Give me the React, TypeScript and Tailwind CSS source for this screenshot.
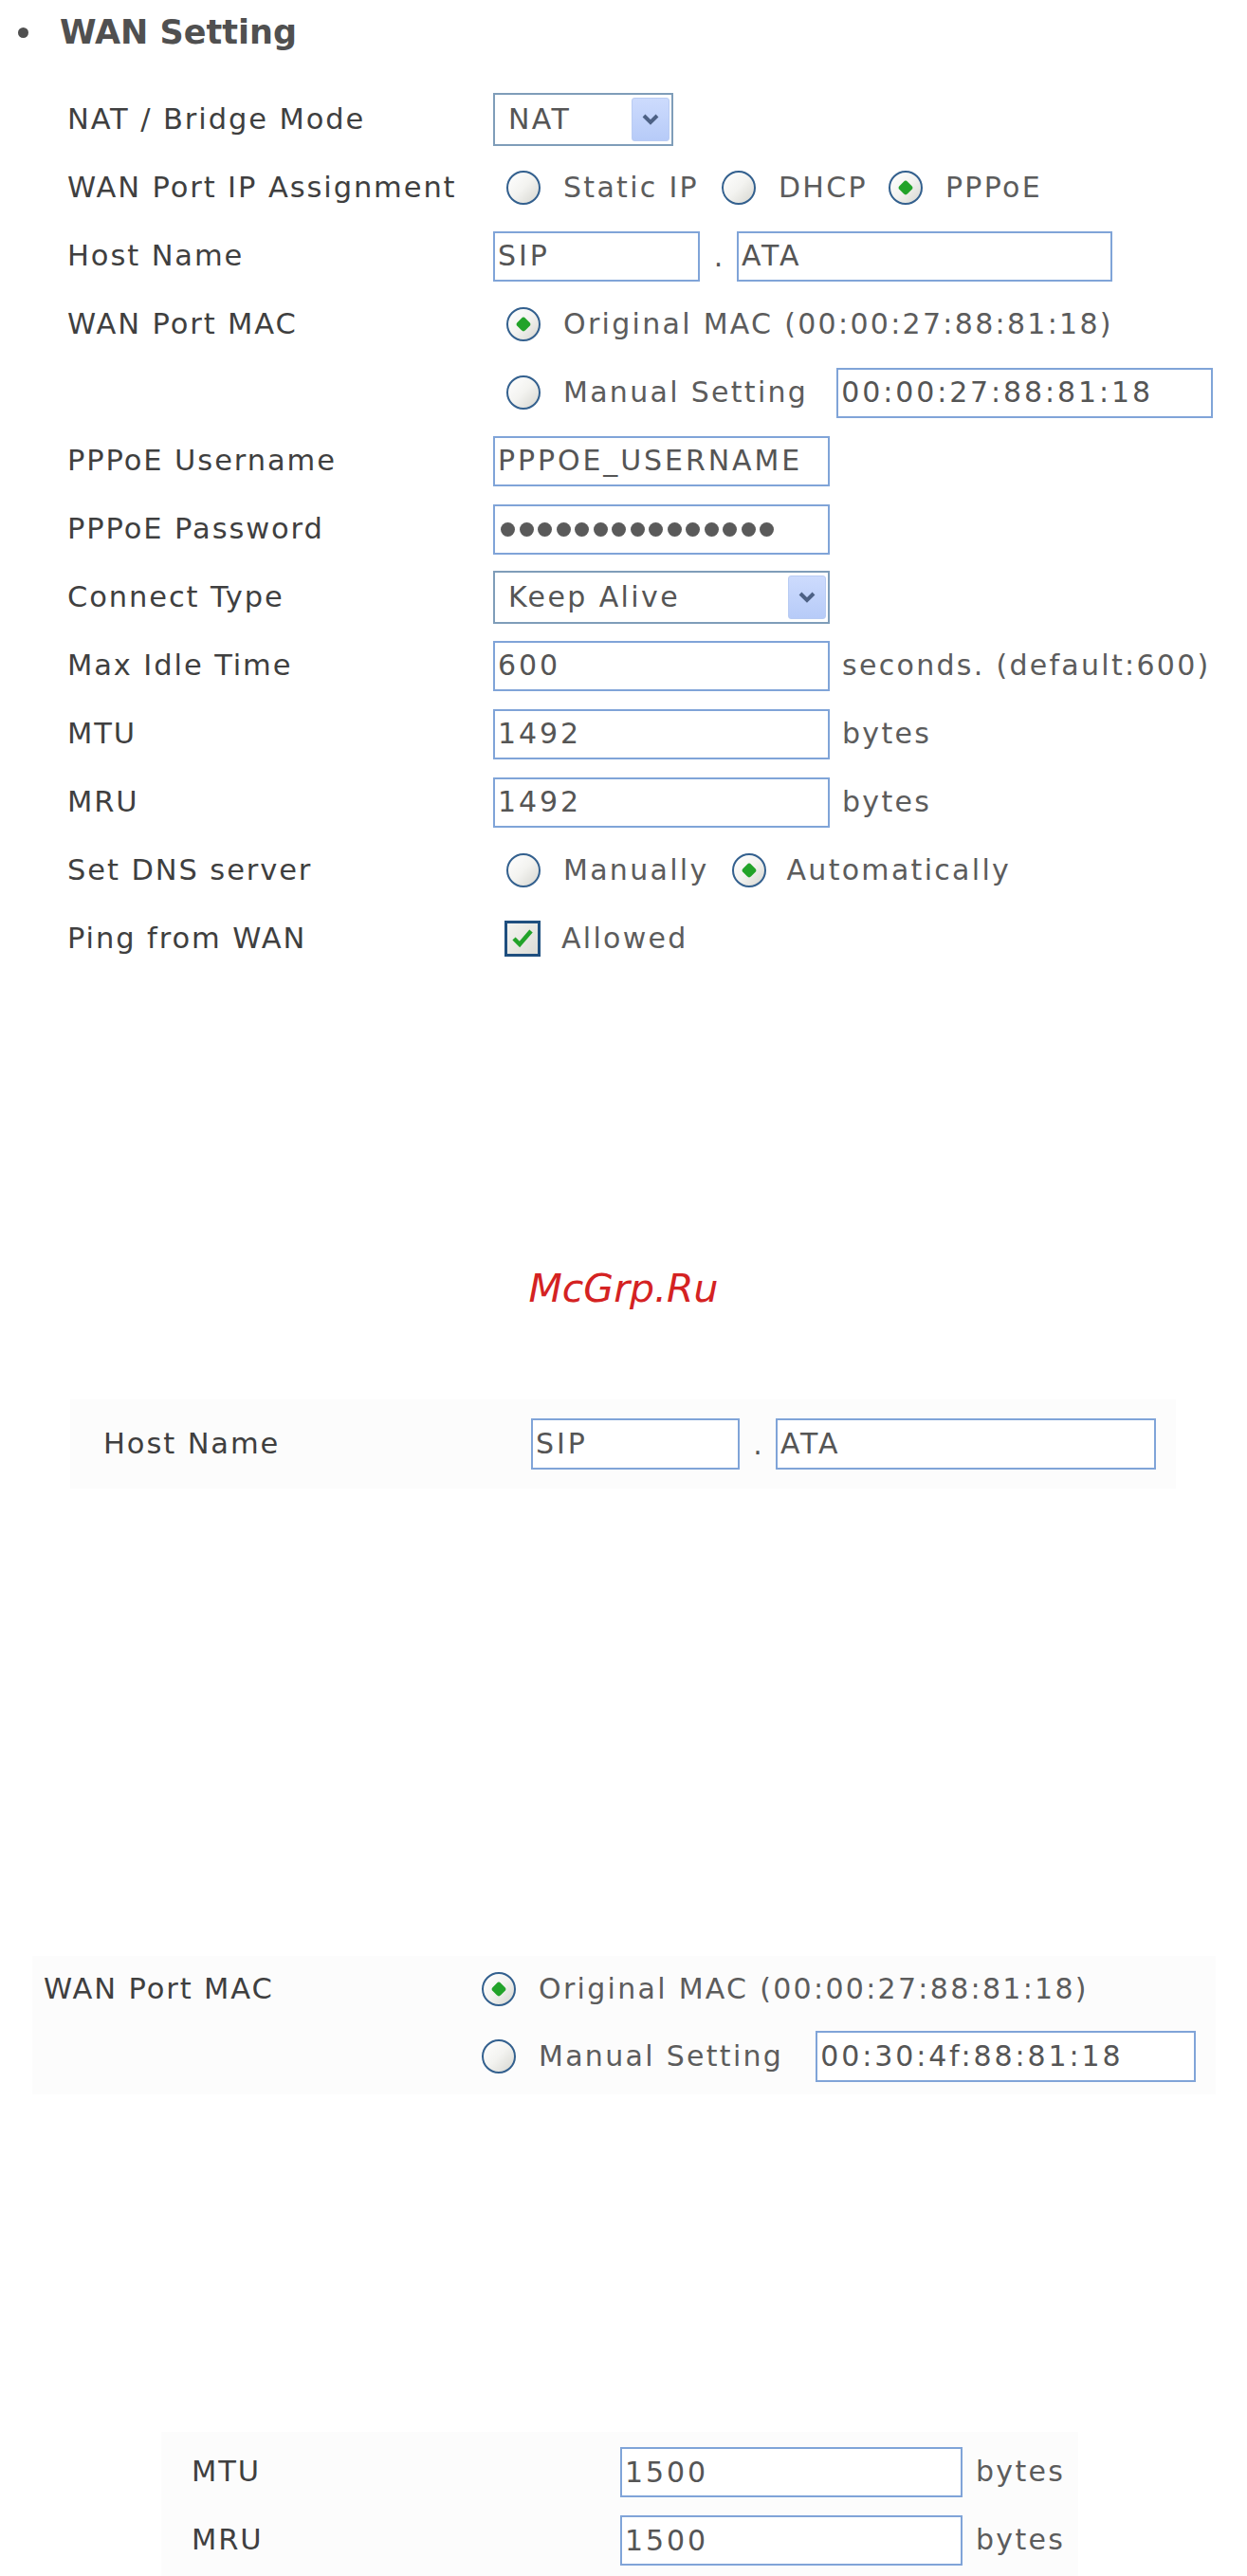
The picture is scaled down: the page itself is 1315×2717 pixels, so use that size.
import type { ReactNode } from 'react';

const font = "font-['DejaVu_Sans',sans-serif]";

function Label({ children }: { children: ReactNode }) {
  return <span className={`${font} text-[30.5px] leading-none tracking-[1.9px] text-[#3f3f3f]`}>{children}</span>;
}

function Opt({ children }: { children: ReactNode }) {
  return <span className={`${font} text-[30px] leading-none tracking-[2.3px] text-[#5c5c5c]`}>{children}</span>;
}

function Input({ value, w, h = 'h-[53px]' }: { value: ReactNode; w: string; h?: string }) {
  return (
    <div className={`flex ${w} ${h} shrink-0 items-center border-2 border-[#80a4d8] bg-white pl-[3px]`}>
      <span className={`${font} text-[30px] leading-none tracking-[2.9px] text-[#555]`}>{value}</span>
    </div>
  );
}

function Select({ value, w }: { value: string; w: string }) {
  return (
    <div className={`flex ${w} h-[56px] shrink-0 items-center justify-between border-2 border-[#7f9db9] bg-white pl-[14px] pr-[2px]`}>
      <span className={`${font} text-[30px] leading-none tracking-[2.4px] text-[#555]`}>{value}</span>
      <div className="flex h-[46px] w-[40px] items-center justify-center rounded-[3px] border border-[#b9ccf3] bg-linear-to-b from-[#cddbfd] to-[#b7cbf8]">
        <svg width="20" height="14" viewBox="0 0 20 14">
          <path d="M3 3 L10 10 L17 3" fill="none" stroke="#4d6185" strokeWidth="4" />
        </svg>
      </div>
    </div>
  );
}

function Radio({ checked = false }: { checked?: boolean }) {
  return (
    <div className="flex h-[36px] w-[36px] shrink-0 items-center justify-center rounded-full border-[2.5px] border-[#33608e] bg-linear-to-br from-white via-[#f3f3f0] to-[#d6d6d0]">
      {checked && <div className="h-[12px] w-[12px] rotate-45 rounded-[3px] bg-[#22a329]" />}
    </div>
  );
}

function Checkbox() {
  return (
    <div className="flex h-[38px] w-[38px] shrink-0 items-center justify-center border-[3px] border-[#1f4f7f] bg-linear-to-br from-[#f4f4f0] to-[#dcdcd6]">
      <svg width="24" height="22" viewBox="0 0 24 22">
        <path d="M3 11 L9 17 L21 3" fill="none" stroke="#22a329" strokeWidth="4.5" />
      </svg>
    </div>
  );
}

function Row({ label, children }: { label?: string; children: ReactNode }) {
  return (
    <div className="flex h-[72px] items-center">
      <div className="w-[449px] shrink-0">{label && <Label>{label}</Label>}</div>
      <div className="flex items-center">{children}</div>
    </div>
  );
}

function Dots() {
  return (
    <div className="flex h-[53px] w-[355px] items-center gap-[4.5px] border-2 border-[#80a4d8] bg-white pl-[6px]">
      {Array.from({ length: 15 }).map((_, i) => (
        <div key={i} className="h-[15px] w-[15px] rounded-full bg-[#5a5a5a]" />
      ))}
    </div>
  );
}

export default function App() {
  return (
    <div className="h-[2717px] w-[1315px] overflow-hidden bg-white">
      {/* main WAN settings form */}
      <div className="pl-[71px]">
        <div className="-ml-[71px] flex h-[90px] items-start pt-[13px]">
          <div className="ml-[19px] mt-[16px] h-[11px] w-[11px] rounded-full bg-[#505050]" />
          <span className="ml-[33px] font-['DejaVu_Sans',sans-serif] text-[35px] font-bold leading-[42px] text-[#505050]">
            WAN Setting
          </span>
        </div>

        <Row label="NAT / Bridge Mode">
          <Select value="NAT" w="w-[190px]" />
        </Row>
        <Row label="WAN Port IP Assignment">
          <div className="ml-[14px] flex items-center">
            <Radio />
            <span className="ml-[24px]"><Opt>Static IP</Opt></span>
            <span className="ml-[24px]"><Radio /></span>
            <span className="ml-[24px]"><Opt>DHCP</Opt></span>
            <span className="ml-[22px]"><Radio checked /></span>
            <span className="ml-[24px]"><Opt>PPPoE</Opt></span>
          </div>
        </Row>
        <Row label="Host Name">
          <Input value="SIP" w="w-[218px]" />
          <span className={`${font} w-[39px] text-center text-[30px] text-[#555]`}>.</span>
          <Input value="ATA" w="w-[396px]" />
        </Row>
        <div className="flex">
          <div className="flex h-[72px] w-[449px] shrink-0 items-center">
            <Label>WAN Port MAC</Label>
          </div>
          <div className="flex flex-col">
            <div className="ml-[14px] flex h-[72px] items-center">
              <Radio checked />
              <span className="ml-[24px]"><Opt>Original MAC (00:00:27:88:81:18)</Opt></span>
            </div>
            <div className="ml-[14px] flex h-[72px] items-center">
              <Radio />
              <span className="ml-[24px]"><Opt>Manual Setting</Opt></span>
              <span className="ml-[30px]"><Input value="00:00:27:88:81:18" w="w-[397px]" /></span>
            </div>
          </div>
        </div>
        <Row label="PPPoE Username">
          <Input value="PPPOE_USERNAME" w="w-[355px]" />
        </Row>
        <Row label="PPPoE Password">
          <Dots />
        </Row>
        <Row label="Connect Type">
          <Select value="Keep Alive" w="w-[355px]" />
        </Row>
        <Row label="Max Idle Time">
          <Input value="600" w="w-[355px]" />
          <span className="ml-[13px]"><Opt>seconds. (default:600)</Opt></span>
        </Row>
        <Row label="MTU">
          <Input value="1492" w="w-[355px]" />
          <span className="ml-[13px]"><Opt>bytes</Opt></span>
        </Row>
        <Row label="MRU">
          <Input value="1492" w="w-[355px]" />
          <span className="ml-[13px]"><Opt>bytes</Opt></span>
        </Row>
        <Row label="Set DNS server">
          <div className="ml-[14px] flex items-center">
            <Radio />
            <span className="ml-[24px]"><Opt>Manually</Opt></span>
            <span className="ml-[24px]"><Radio checked /></span>
            <span className="ml-[22px]"><Opt>Automatically</Opt></span>
          </div>
        </Row>
        <Row label="Ping from WAN">
          <div className="ml-[12px] flex items-center">
            <Checkbox />
            <span className="ml-[22px]"><Opt>Allowed</Opt></span>
          </div>
        </Row>
      </div>

      {/* watermark */}
      <div className="mt-[309px] flex h-[48px] items-center justify-center">
        <span className="font-['DejaVu_Sans',sans-serif] text-[41px] italic leading-none text-[#d42222]">McGrp.Ru</span>
      </div>

      {/* host name detail */}
      <div className="ml-[74px] mt-[93px] flex h-[94px] w-[1166px] items-center bg-[#fcfcfc] pl-[35px]">
        <div className="w-[451px] shrink-0"><Label>Host Name</Label></div>
        <Input value="SIP" w="w-[220px]" h="h-[54px]" />
        <span className={`${font} w-[38px] text-center text-[30px] text-[#555]`}>.</span>
        <Input value="ATA" w="w-[401px]" h="h-[54px]" />
      </div>

      {/* WAN port MAC detail */}
      <div className="ml-[34px] mt-[493px] flex h-[146px] w-[1248px] bg-[#fcfcfc] pl-[12px]">
        <div className="flex h-[70px] w-[462px] shrink-0 items-center">
          <Label>WAN Port MAC</Label>
        </div>
        <div className="flex flex-col">
          <div className="flex h-[70px] items-center">
            <Radio checked />
            <span className="ml-[24px]"><Opt>Original MAC (00:00:27:88:81:18)</Opt></span>
          </div>
          <div className="flex h-[72px] items-center">
            <Radio />
            <span className="ml-[24px]"><Opt>Manual Setting</Opt></span>
            <span className="ml-[34px]"><Input value="00:30:4f:88:81:18" w="w-[401px]" h="h-[54px]" /></span>
          </div>
        </div>
      </div>

      {/* MTU / MRU detail */}
      <div className="ml-[170px] mt-[356px] flex h-[152px] w-[967px] flex-col gap-[19px] bg-[#fcfcfc] pl-[32px] pt-[16px]">
        <div className="flex items-center">
          <div className="w-[452px] shrink-0"><Label>MTU</Label></div>
          <Input value="1500" w="w-[361px]" />
          <span className="ml-[14px]"><Opt>bytes</Opt></span>
        </div>
        <div className="flex items-center">
          <div className="w-[452px] shrink-0"><Label>MRU</Label></div>
          <Input value="1500" w="w-[361px]" />
          <span className="ml-[14px]"><Opt>bytes</Opt></span>
        </div>
      </div>
    </div>
  );
}
